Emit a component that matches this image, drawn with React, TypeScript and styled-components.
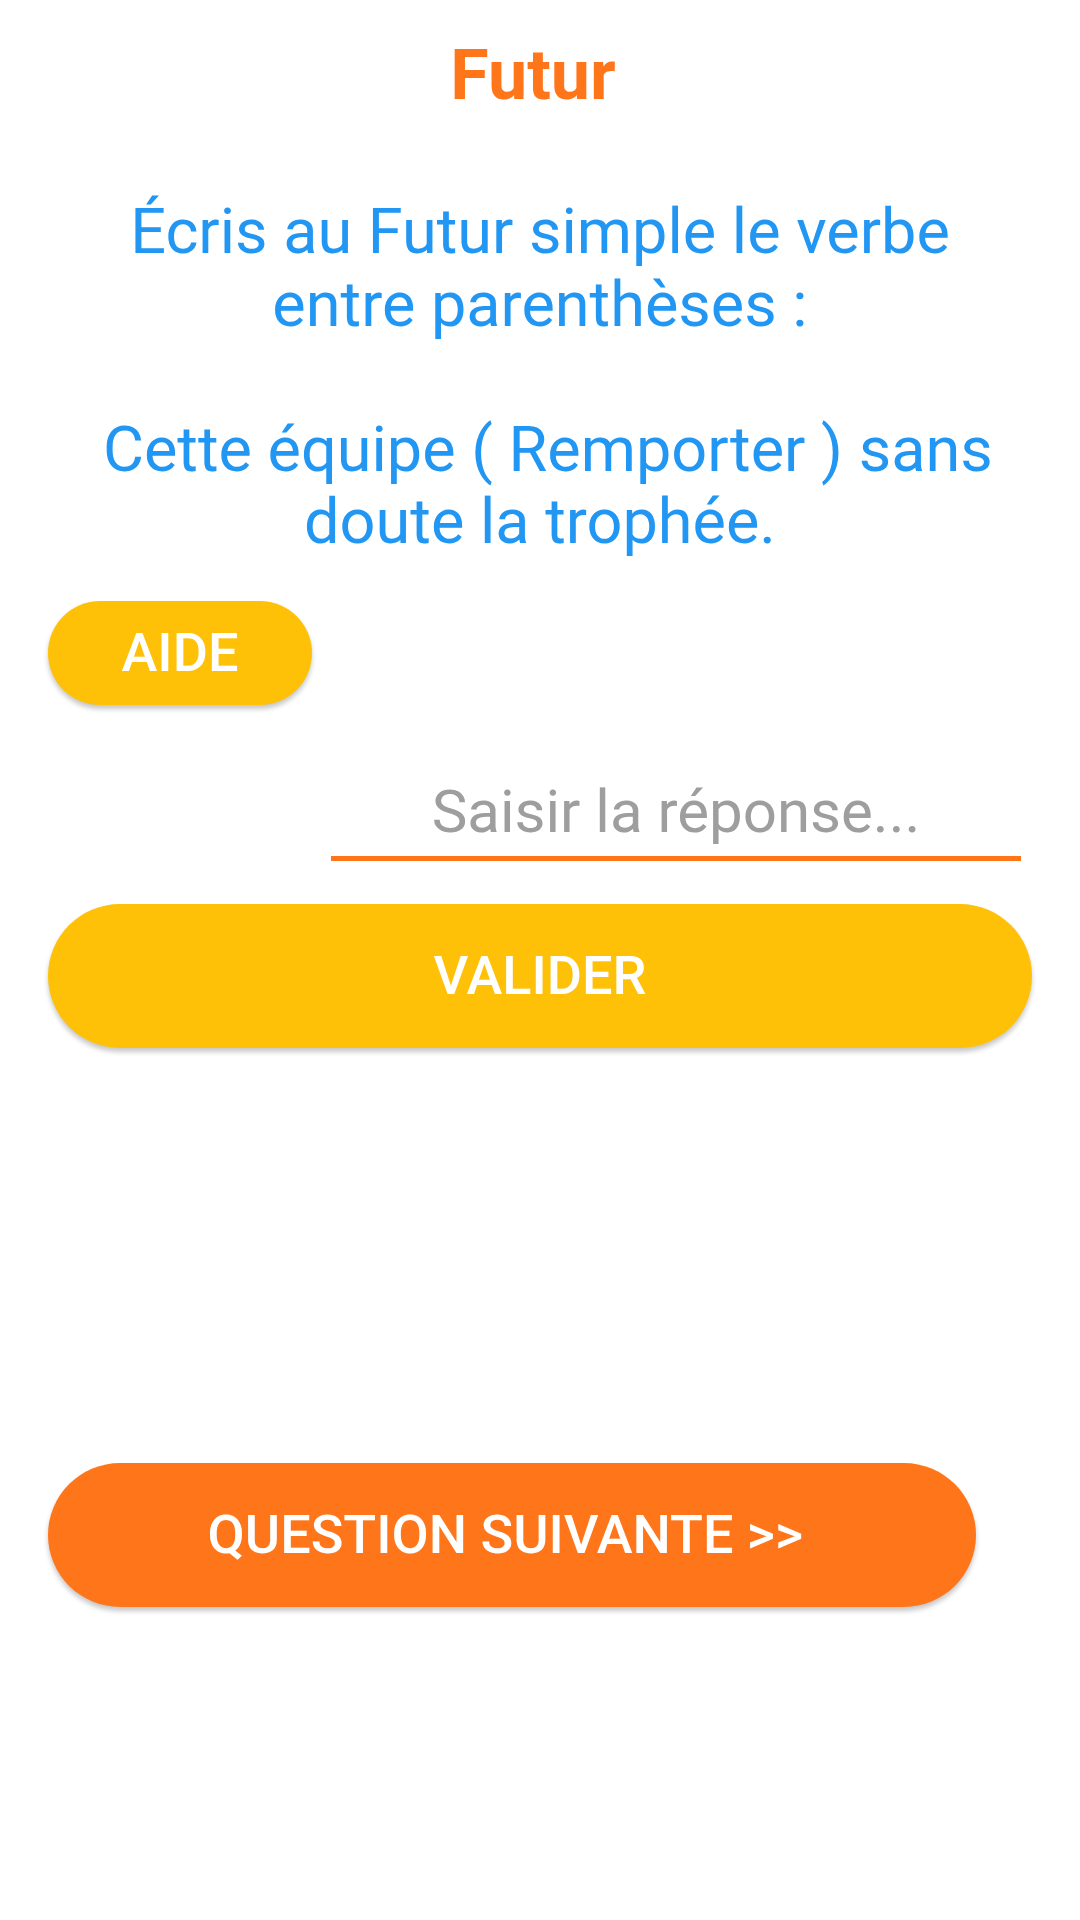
import React, { FunctionComponent } from 'react'
import styled, { createGlobalStyle } from 'styled-components'

const GlobalStyle = createGlobalStyle`
    html, body {
        margin: 0;
        padding: 0;
        background: #ffffff;
    }
    body {
        font-family: Roboto, 'Noto Sans', 'Liberation Sans', sans-serif;
    }
`

const colors = {
    orange: '#FF761A',
    amber: '#FFC107',
    blue: '#2196F3',
    grey: '#9E9E9E',
}

const Root = styled.div`
    width: 1080px;
    min-height: 1920px;
    box-sizing: border-box;
    padding: 34px 48px 0 48px;
    display: flex;
    flex-direction: column;
`

const Title = styled.h1`
    margin: 0;
    padding-right: 14px;
    color: ${colors.orange};
    font-size: 70px;
    font-weight: 700;
    line-height: 82px;
    text-align: center;
`

const Question = styled.p`
    margin: 80px 0 0 0;
    padding: 0 27px;
    color: ${colors.blue};
    font-size: 63px;
    font-weight: 400;
    line-height: 72.5px;
    text-align: center;
    white-space: pre-wrap;
`

const PillButton = styled.button<{ bg: string; w?: string; h: number }>`
    display: flex;
    align-items: center;
    justify-content: center;
    width: ${(p) => p.w || '100%'};
    height: ${(p) => p.h}px;
    border: none;
    border-radius: ${(p) => p.h / 2}px;
    background: ${(p) => p.bg};
    color: #ffffff;
    font-family: Roboto, 'Noto Sans', sans-serif;
    font-size: 54px;
    font-weight: 500;
    white-space: pre;
    box-shadow: 0 4px 5px rgba(0, 0, 0, 0.22);
    padding: 0;
    cursor: pointer;
`

const HelpRow = styled.div`
    margin-top: 42px;
    display: flex;
`

const AnswerRow = styled.div`
    margin-top: 56px;
    display: flex;
    justify-content: flex-end;
    padding-right: 11px;
`

const AnswerInput = styled.input`
    width: 690px;
    height: 100px;
    box-sizing: border-box;
    border: none;
    border-bottom: 5px solid ${colors.orange};
    outline: none;
    background: transparent;
    padding: 6px 0 0 0;
    text-align: center;
    font-family: Roboto, 'Noto Sans', sans-serif;
    font-size: 60px;
    color: #333;

    &::placeholder {
        color: ${colors.grey};
    }
`

const ValidateRow = styled.div`
    margin-top: 43px;
    display: flex;
`

const NextRow = styled.div`
    margin-top: 415px;
    display: flex;
`

const App: FunctionComponent = () => {
    return (
        <Root>
            <GlobalStyle />
            <Title>Futur</Title>
            <Question>
                {'Écris au Futur simple le verbe entre parenthèses :\n\n Cette équipe ( Remporter ) sans doute la trophée.'}
            </Question>
            <HelpRow>
                <PillButton bg={colors.amber} w="264px" h={104}>
                    AIDE
                </PillButton>
            </HelpRow>
            <AnswerRow>
                <AnswerInput placeholder="Saisir la réponse..." />
            </AnswerRow>
            <ValidateRow>
                <PillButton bg={colors.amber} h={144}>
                    VALIDER
                </PillButton>
            </ValidateRow>
            <NextRow>
                <PillButton bg={colors.orange} w="928px" h={144}>
                    {'QUESTION SUIVANTE >> '}
                </PillButton>
            </NextRow>
        </Root>
    )
}

export default App
